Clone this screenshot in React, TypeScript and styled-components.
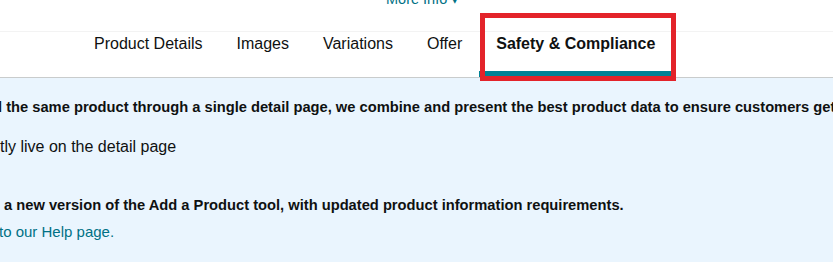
import styled, { createGlobalStyle } from 'styled-components';

const GlobalStyle = createGlobalStyle`
  body {
    margin: 0;
    background: #ffffff;
    font-family: 'Liberation Sans', Arial, sans-serif;
    color: #0f1111;
    overflow: hidden;
  }
`;

const Page = styled.div`
  width: 833px;
  height: 271px;
  overflow: hidden;
`;

const MoreInfoRow = styled.div`
  display: flex;
  padding-left: 386px;
  margin-top: -9px;
  height: 16px;
  margin-bottom: 24px;
`;

const MoreInfo = styled.a`
  font-size: 14.5px;
  line-height: 16px;
  color: #007185;
  text-decoration: none;
`;

const TabBar = styled.div`
  display: flex;
  height: 45px;
  padding-left: 77px;
  border-top: 1px solid #f3f3f3;
  border-bottom: 1px solid #c9cccc;
  box-shadow: 0 1px 1px rgba(0, 0, 0, 0.06);
`;

const Tab = styled.div<{ $active?: boolean }>`
  position: relative;
  padding: 2px 17px 0;
  font-size: 16px;
  line-height: 20px;
  font-weight: ${(p) => (p.$active ? 700 : 400)};
  color: #0f1111;
  box-sizing: border-box;
  height: 45px;
  border-bottom: 6px solid ${(p) => (p.$active ? '#008296' : 'transparent')};
`;

// red annotation box drawn over the active tab
const Highlight = styled.span`
  position: absolute;
  left: 1px;
  right: -4px;
  top: -19px;
  bottom: -10px;
  border: 5px solid #e3232a;
  pointer-events: none;
`;

const Banner = styled.div`
  background: #eaf5fe;
  padding: 19px 0 20px;
`;

const Group = styled.div<{ $gap: number; $top?: number }>`
  display: flex;
  flex-direction: column;
  gap: ${(p) => p.$gap}px;
  margin-top: ${(p) => p.$top ?? 0}px;
`;

const Heading = styled.div<{ $shift?: number }>`
  font-size: 14.7px;
  line-height: 20px;
  font-weight: 700;
  white-space: nowrap;
  margin-left: ${(p) => p.$shift ?? 0}px;
`;

const Text = styled.div<{ $link?: boolean; $size?: number; $shift?: number }>`
  font-size: ${(p) => p.$size ?? 16}px;
  line-height: 20px;
  white-space: nowrap;
  margin-left: ${(p) => p.$shift ?? 0}px;
  color: ${(p) => (p.$link ? '#007185' : '#0f1111')};
`;

const tabs = ['Product Details', 'Images', 'Variations', 'Offer', 'Safety & Compliance'];

export default function App() {
  return (
    <Page>
      <GlobalStyle />
      <MoreInfoRow>
        <MoreInfo href="#">More Info ▾</MoreInfo>
      </MoreInfoRow>
      <TabBar>
        {tabs.map((t) => (
          <Tab key={t} $active={t === 'Safety & Compliance'}>
            {t}
            {t === 'Safety & Compliance' && <Highlight />}
          </Tab>
        ))}
      </TabBar>
      <Banner>
        <Group $gap={20}>
          <Heading $shift={-2}>
            l the same product through a single detail page, we combine and present the best product data to ensure customers get the best experience.
          </Heading>
          <Text>tly live on the detail page</Text>
        </Group>
        <Group $gap={7} $top={38}>
          <Heading $shift={4}>
            a new version of the Add a Product tool, with updated product information requirements.
          </Heading>
          <Text $link $size={15} $shift={-1}>to our Help page.</Text>
        </Group>
      </Banner>
    </Page>
  );
}
